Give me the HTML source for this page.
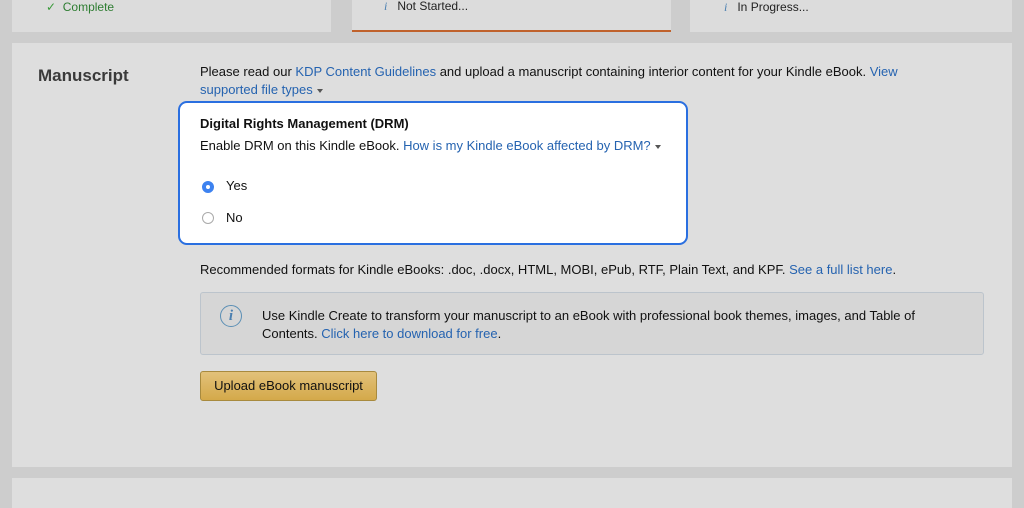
<!DOCTYPE html>
<html><head><style>
body{margin:0;width:1024px;height:504px;background:#cdcdcd;font-family:"Liberation Sans",sans-serif;position:relative;overflow:hidden;color:#111}
.a{position:absolute}
.tab{position:absolute;top:-4px;height:36px;background:#dcdcdc;font-size:12px;color:#222}
a{color:#2563b0;text-decoration:none}
.t{font-size:13px;line-height:18px}
.car{display:inline-block;width:0;height:0;border-left:3.5px solid transparent;border-right:3.5px solid transparent;border-top:4px solid #555;vertical-align:middle;margin-left:4px}
.rad{position:absolute;width:12px;height:12px;border-radius:50%;border:1px solid #aaa;background:#fff;box-sizing:border-box}
</style></head><body>
<div class="tab" style="left:12px;width:319px"><span class="a" style="left:34px;top:4px;color:#2e7d32"><span style="color:#3a9a3a">✓</span>&nbsp; Complete</span></div>
<div class="tab" style="left:352px;width:319px;border-bottom:2px solid #c0622c;height:34px"><span class="a" style="left:32px;top:3px"><i style="color:#4a7fb0;font-family:'Liberation Serif'">i</i>&nbsp;&nbsp; Not Started...</span></div>
<div class="tab" style="left:690px;width:322px"><span class="a" style="left:34px;top:4px"><i style="color:#4a7fb0;font-family:'Liberation Serif'">i</i>&nbsp;&nbsp; In Progress...</span></div>
<div class="a" style="left:12px;top:43px;width:1000px;height:424px;background:#dedede"></div>
<div class="a" style="left:12px;top:478px;width:1000px;height:30px;background:#dedede"></div>
<div class="a" style="left:38px;top:66px;font-size:17px;font-weight:bold;color:#3a3a3a">Manuscript</div>
<div class="a t" style="left:200px;top:63px;width:735px">Please read our <a>KDP Content Guidelines</a> and upload a manuscript containing interior content for your Kindle eBook. <a>View supported file types</a><span class="car"></span></div>
<div class="a" style="left:178px;top:101px;width:506px;height:140px;background:#fff;border:2px solid #2a6fe0;border-radius:9px"></div>
<div class="a t" style="left:200px;top:115px;font-weight:bold">Digital Rights Management (DRM)</div>
<div class="a t" style="left:200px;top:137px">Enable DRM on this Kindle eBook. <a>How is my Kindle eBook affected by DRM?</a><span class="car"></span></div>
<div class="rad" style="left:202px;top:181px;border:4px solid #3d82f0"></div>
<div class="a t" style="left:226px;top:177px">Yes</div>
<div class="rad" style="left:202px;top:212px"></div>
<div class="a t" style="left:226px;top:209px">No</div>
<div class="a t" style="left:200px;top:261px">Recommended formats for Kindle eBooks: .doc, .docx, HTML, MOBI, ePub, RTF, Plain Text, and KPF. <a>See a full list here</a>.</div>
<div class="a" style="left:200px;top:292px;width:782px;height:61px;background:#d6d6d6;border:1px solid #bcc4cc;border-radius:3px"></div>
<div class="a" style="left:220px;top:305px;width:22px;height:22px;border:1.5px solid #5b8fb5;border-radius:50%;box-sizing:border-box;text-align:center;font:italic bold 15px/20px 'Liberation Serif',serif;color:#4a7fb0">i</div>
<div class="a t" style="left:262px;top:307px;width:710px">Use Kindle Create to transform your manuscript to an eBook with professional book themes, images, and Table of Contents. <a>Click here to download for free</a>.</div>
<div class="a" style="left:200px;top:371px;width:177px;height:30px;background:linear-gradient(#e2c17a,#d4a94a);border:1px solid #a88a3e;border-radius:3px;box-sizing:border-box;font-size:13px;line-height:28px;text-align:center;color:#111">Upload eBook manuscript</div>
</body></html>
